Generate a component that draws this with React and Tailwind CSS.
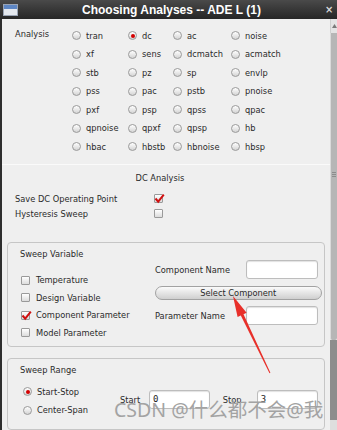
const rows = [
  ["tran", "dc", "ac", "noise"],
  ["xf", "sens", "dcmatch", "acmatch"],
  ["stb", "pz", "sp", "envlp"],
  ["pss", "pac", "pstb", "pnoise"],
  ["pxf", "psp", "qpss", "qpac"],
  ["qpnoise", "qpxf", "qpsp", "hb"],
  ["hbac", "hbstb", "hbnoise", "hbsp"],
];

const Radio = ({ on }) => (
  <span className="w-[9px] h-[9px] rounded-full border border-[#9a9a9a] bg-linear-to-b from-white to-[#d4d4d4] flex items-center justify-center shrink-0">
    {on && <span className="w-[4px] h-[4px] rounded-full bg-[#d40000]" />}
  </span>
);

const Check = ({ on }) => (
  <span className="relative w-[9px] h-[9px] rounded-[1px] border border-[#9a9a9a] bg-linear-to-b from-white to-[#dcdcdc] shrink-0">
    {on && (
      <svg className="absolute -top-[2px] -left-[1px]" width="11" height="11" viewBox="0 0 11 11">
        <path d="M1.5 5.5 L4.2 8.6 L9.8 1.6" fill="none" stroke="#d01010" strokeWidth="2" />
      </svg>
    )}
  </span>
);

const Field = ({ w, value }) => (
  <div className={`${w} h-[19px] bg-white border border-[#bdbdbd] rounded-[3px] shadow-[inset_0_1px_1px_rgba(0,0,0,0.12)] pl-[3px] flex items-center font-['DejaVu_Sans_Mono',monospace] text-[9px] text-[#222]`}>
    {value}
  </div>
);

export default function App() {
  return (
    <div className="w-[337px] h-[430px] overflow-hidden relative bg-[#efefef] flex flex-col font-['DejaVu_Sans_Condensed','Liberation_Sans',sans-serif] text-[9.2px] text-[#2a2a2a]">
      {/* title bar */}
      <div className="h-[19px] shrink-0 bg-linear-to-b from-[#4a4a4a] to-[#262626] flex items-center">
        <div className="ml-[3px] w-[15px] h-[12px] border border-[#9aa4b4] bg-[#e4e8ee] flex flex-col">
          <div className="h-[4px] bg-[#5d86c4]" />
        </div>
        <div className="flex-1 text-center text-white font-bold text-[12px] font-['Liberation_Sans',sans-serif]">
          Choosing Analyses -- ADE L (1)
        </div>
        <div className="w-[10px] mr-[2px] text-[#d8d8d8] font-bold text-[11px] leading-none">×</div>
      </div>

      <div className="flex-1 flex min-h-0">
        <div className="flex-1 border-l-2 border-[#2e2e2e] flex flex-col">
          {/* analysis choices */}
          <div className="pt-[7.5px] pl-[13px] flex">
            <div className="w-[57px] h-[18.5px] flex items-center pb-[3px]">Analysis</div>
            <div className="grid grid-cols-[56px_45px_58px_1fr]">
              {rows.flat().map((name) => (
                <div key={name} className="h-[18.5px] flex items-center gap-[5px]">
                  <Radio on={name === "dc"} />
                  <span>{name}</span>
                </div>
              ))}
            </div>
          </div>

          <div className="mt-[7.5px] h-px bg-[#cdcdcd]" />
          <div className="h-px bg-[#fafafa]" />

          <div className="mt-[6px] h-[14px] leading-[14px] text-center pr-[12px]">DC Analysis</div>

          <div className="mt-[6px] pl-[13px]">
            <div className="h-[15px] flex items-center">
              <span className="w-[139px]">Save DC Operating Point</span>
              <Check on />
            </div>
            <div className="h-[15px] flex items-center">
              <span className="w-[139px]">Hysteresis Sweep</span>
              <Check />
            </div>
          </div>

          {/* sweep variable */}
          <div className="mt-[21px] mx-[5px] border border-[#c6c6c6] rounded-[4px] pt-[5px] pb-[5px]">
            <div className="h-[12px] leading-[12px] pl-[12px]">Sweep Variable</div>
            <div className="flex pl-[13px]">
              <div className="w-[134px] pt-[11px]">
                {[
                  ["Temperature", false],
                  ["Design Variable", false],
                  ["Component Parameter", true],
                  ["Model Parameter", false],
                ].map(([label, on]) => (
                  <div key={label} className="h-[17.5px] flex items-center gap-[6px]">
                    <Check on={on} />
                    <span>{label}</span>
                  </div>
                ))}
              </div>
              <div className="w-[166.5px] flex flex-col">
                <div className="h-[19px] flex items-center justify-between pr-[3.5px]">
                  <span>Component Name</span>
                  <Field w="w-[72px]" />
                </div>
                <div className="mt-[6.5px] h-[14px] rounded-full border border-[#a2a2a2] bg-linear-to-b from-[#fbfbfb] to-[#cfcfcf] flex items-center justify-center">
                  Select Component
                </div>
                <div className="mt-[6.5px] h-[19px] flex items-center justify-between pr-[3.5px]">
                  <span>Parameter Name</span>
                  <Field w="w-[72px]" />
                </div>
              </div>
            </div>
          </div>

          {/* sweep range */}
          <div className="mt-[11px] mx-[5px] border border-[#c6c6c6] rounded-[4px] pt-[5px] h-[80px]">
            <div className="h-[12px] leading-[12px] pl-[12px]">Sweep Range</div>
            <div className="flex pl-[15px]">
              <div className="w-[97px] pt-[6px]">
                <div className="h-[18.5px] flex items-center gap-[5px]">
                  <Radio on />
                  <span>Start-Stop</span>
                </div>
                <div className="h-[18.5px] flex items-center gap-[5px]">
                  <Radio />
                  <span>Center-Span</span>
                </div>
              </div>
              <div className="pt-[14px] flex items-center h-fit">
                <span className="w-[29px]">Start</span>
                <Field w="w-[61px]" value="0" />
                <span className="ml-[12.7px] w-[34px]">Stop</span>
                <Field w="w-[61px]" value="3" />
              </div>
            </div>
          </div>
        </div>

        {/* scrollbar */}
        <div className="w-[7px] flex flex-col">
          <div className="h-[14px] bg-[#e4e4e4] border-l border-[#d0d0d0] flex items-center justify-center">
            <svg width="5" height="4" viewBox="0 0 5 4">
              <path d="M0 4 L2.5 0 L5 4 Z" fill="#7a7a7a" />
            </svg>
          </div>
          <div className="h-[307px] bg-[#b6b6b6] border-l border-[#dadada] rounded-b-[2px] flex flex-col items-center pt-[139px] gap-[1px]">
            <div className="w-[4px] h-px bg-[#8c8c8c]" />
            <div className="w-[4px] h-px bg-[#8c8c8c]" />
            <div className="w-[4px] h-px bg-[#8c8c8c]" />
          </div>
          <div className="flex-1 bg-[#8d8d8d]" />
          <div className="h-[10px] bg-[#dedede]" />
        </div>
      </div>

      {/* red arrow annotation */}
      <svg className="absolute inset-0 pointer-events-none" width="337" height="430" viewBox="0 0 337 430">
        <polygon
          points="233,296 246.6,312.7 243.5,314.3 270.4,372.8 269.5,373.2 240.8,315.5 237.6,317.1"
          fill="#e8302a"
        />
      </svg>

      {/* watermark */}
      <div className="absolute left-[114px] top-[398px] text-[19.5px] leading-[24px] text-[#a3a3a3] font-['Noto_Sans','Noto_Sans_CJK_SC',sans-serif] whitespace-nowrap pointer-events-none">
        CSDN @什么都不会@我
      </div>
    </div>
  );
}
